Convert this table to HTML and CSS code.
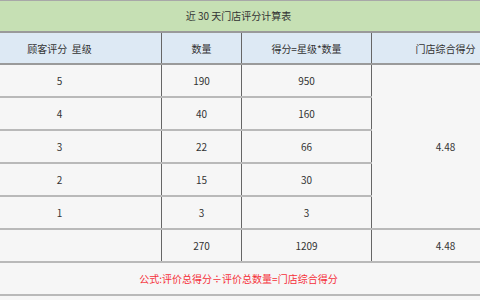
FILE: index.html
```html
<!DOCTYPE html>
<html lang="zh">
<head>
<meta charset="utf-8">
<link rel="stylesheet" href="styles.css">
</head>
<body>
<table class="sheet">
  <colgroup>
    <col class="c1"><col class="c2"><col class="c3"><col class="c4">
  </colgroup>
  <tr class="title"><td colspan="4">近 30 天门店评分计算表</td></tr>
  <tr class="head"><td>顾客评分&nbsp; 星级</td><td>数量</td><td>得分=星级*数量</td><td>门店综合得分</td></tr>
  <tr><td>5</td><td>190</td><td>950</td><td rowspan="5" class="merged">4.48</td></tr>
  <tr><td>4</td><td>40</td><td>160</td></tr>
  <tr><td>3</td><td>22</td><td>66</td></tr>
  <tr><td>2</td><td>15</td><td>30</td></tr>
  <tr><td>1</td><td>3</td><td>3</td></tr>
  <tr class="total"><td></td><td>270</td><td>1209</td><td>4.48</td></tr>
  <tr class="formula"><td colspan="4">公式:评价总得分÷评价总数量=门店综合得分</td></tr>
</table>
</body>
</html>
```

FILE: styles.css
```css
html, body {
  margin: 0;
  padding: 0;
  background: #f6f6f6;
  overflow: hidden;
}
.sheet {
  margin-left: -43px;
  width: 562px;
  table-layout: fixed;
  border-collapse: collapse;
  font-family: "Noto Sans CJK SC", "Noto Sans", sans-serif;
  font-size: 10px;
  color: #333;
  background: #f6f6f6;
  border-top: 1px solid #a8a8a8;
}
.c1 { width: 204px; }
.c2 { width: 80px; }
.c3 { width: 130px; }
.c4 { width: 148px; }
.sheet td {
  height: 33px;
  box-sizing: border-box;
  padding: 2px 0 0;
  text-align: center;
  vertical-align: middle;
  border-bottom: 2px solid #b9b9b9;
  border-left: 1px solid #666;
  border-right: 1px solid #666;
  line-height: 14px;
}
.title td {
  height: 31px;
  background: #c6e0b4;
  border-bottom: 2px solid #9a9a9a;
  padding-top: 1px;
}
.head td {
  height: 32px;
  background: #dde9f4;
  border-bottom: 2px solid #9a9a9a;
  padding-top: 3px;
}
.formula td {
  color: #f5313a;
}
```
